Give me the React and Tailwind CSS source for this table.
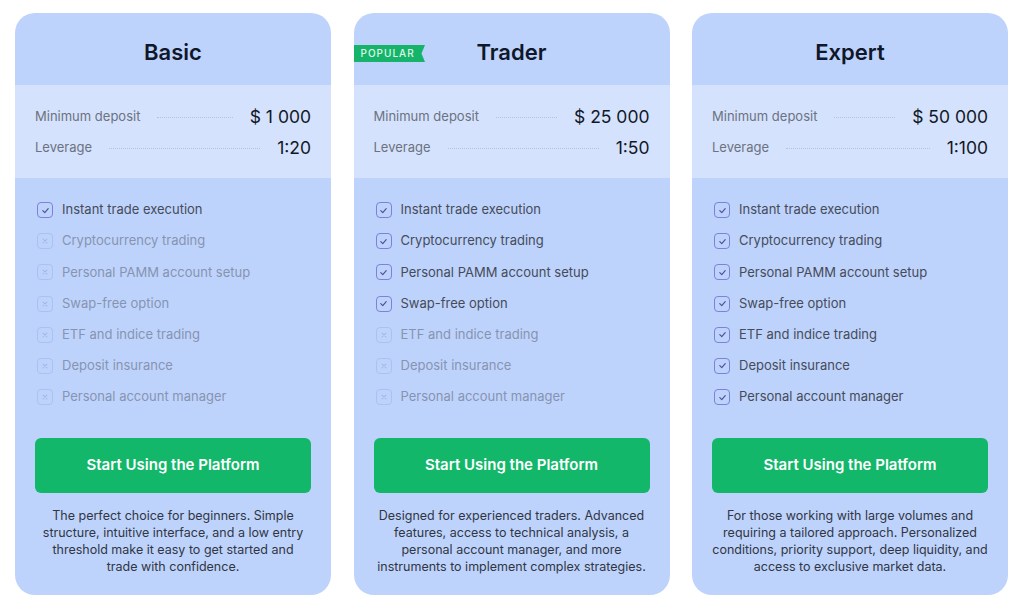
import React from "react";

const features = [
  "Instant trade execution",
  "Cryptocurrency trading",
  "Personal PAMM account setup",
  "Swap-free option",
  "ETF and indice trading",
  "Deposit insurance",
  "Personal account manager",
];

const plans = [
  {
    name: "Basic",
    deposit: "$ 1 000",
    leverage: "1:20",
    enabled: 1,
    descPad: "px-[22px]",
    desc: "The perfect choice for beginners. Simple structure, intuitive interface, and a low entry threshold make it easy to get started and trade with confidence.",
  },
  {
    name: "Trader",
    deposit: "$ 25 000",
    leverage: "1:50",
    enabled: 4,
    popular: true,
    descPad: "px-[17px]",
    desc: "Designed for experienced traders. Advanced features, access to technical analysis, a personal account manager, and more instruments to implement complex strategies.",
  },
  {
    name: "Expert",
    deposit: "$ 50 000",
    leverage: "1:100",
    enabled: 7,
    descPad: "px-[17px]",
    desc: "For those working with large volumes and requiring a tailored approach. Personalized conditions, priority support, deep liquidity, and access to exclusive market data.",
  },
];

function Check() {
  return (
    <span className="flex h-4 w-4 shrink-0 items-center justify-center rounded-[4px] border-[1.5px] border-[#7d80dc]">
      <svg width="9" height="9" viewBox="0 0 10 10" fill="none">
        <path d="M2 5.2 L4.2 7.3 L8 3" stroke="#4b4f9c" strokeWidth="1.3" strokeLinecap="round" strokeLinejoin="round" />
      </svg>
    </span>
  );
}

function Cross() {
  return (
    <span className="flex h-4 w-4 shrink-0 items-center justify-center rounded-[4px] border-[1.5px] border-[#adc0f0]">
      <svg width="8" height="8" viewBox="0 0 10 10" fill="none">
        <path d="M2.5 2.5 L7.5 7.5 M7.5 2.5 L2.5 7.5" stroke="#9fb3ea" strokeWidth="1.3" strokeLinecap="round" />
      </svg>
    </span>
  );
}

function Row({ label, value }) {
  return (
    <div className="flex h-6 items-center">
      <span className="text-[13px] text-[#6b7280]">{label}</span>
      <span className="mx-[17px] flex-1 border-t border-dotted border-[#b3c2dd]" />
      <span className="text-[17.5px] font-normal text-[#111827]">{value}</span>
    </div>
  );
}

function Card({ plan }) {
  return (
    <div className="relative flex w-[316px] flex-col overflow-hidden rounded-[20px] bg-[#bed3fb]">
      {plan.popular && (
        <div className="absolute left-0 top-[32px] flex h-[17px] items-center">
          <div className="flex h-[17px] items-center bg-[#16b46a] pl-[7px] pr-[4px] text-[10px] font-medium tracking-[1px] text-[#dcf7e8]">
            POPULAR
          </div>
          <svg width="6" height="17" viewBox="0 0 6 17">
            <path d="M0 0 H6 L2.5 8.5 L6 17 H0 Z" fill="#16b46a" />
          </svg>
        </div>
      )}
      <div className="flex h-[72px] items-center justify-center pt-[6px]">
        <h2 className="text-[22px] font-semibold text-[#0f172a]">{plan.name}</h2>
      </div>
      <div className="flex h-[93px] flex-col justify-center gap-[7px] bg-[#d5e2fd] px-5 pt-[2px]">
        <Row label="Minimum deposit" value={plan.deposit} />
        <Row label="Leverage" value={plan.leverage} />
      </div>
      <ul className="flex flex-col gap-[11.2px] px-[22px] pt-[22px]">
        {features.map((f, i) => {
          const on = i < plan.enabled;
          return (
            <li key={f} className="flex h-5 items-center gap-[9px]">
              {on ? <Check /> : <Cross />}
              <span className={"text-[13px] " + (on ? "text-[#454b5a]" : "text-[#8693b2]")}>{f}</span>
            </li>
          );
        })}
      </ul>
      <div className="px-5 pt-[31px]">
        <button className="h-[55px] w-full rounded-[6px] bg-[#12b76a] text-[15px] font-semibold text-white">
          Start Using the Platform
        </button>
      </div>
      <p className={"pt-[14px] pb-[20px] text-center text-[12.5px] leading-[17px] text-[#303644] " + plan.descPad}>
        {plan.desc}
      </p>
    </div>
  );
}

export default function App() {
  return (
    <div
      className="flex h-[607px] w-[1024px] items-start gap-[22.5px] bg-white pl-[15px] pt-[13px]"
      style={{ fontFamily: "Inter, 'Noto Sans', sans-serif" }}
    >
      {plans.map((p) => (
        <Card key={p.name} plan={p} />
      ))}
    </div>
  );
}
